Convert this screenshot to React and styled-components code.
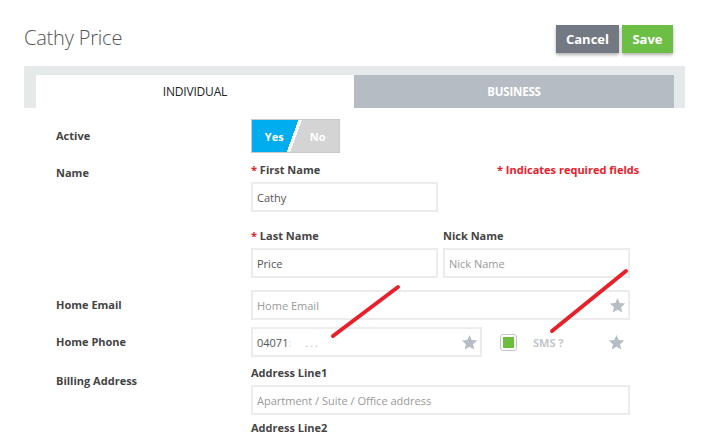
import React from "react";
import styled, { createGlobalStyle } from "styled-components";

const GlobalStyle = createGlobalStyle`
  html, body {
    margin: 0;
    padding: 0;
    background: #fff;
    font-family: "Open Sans", "Liberation Sans", Arial, sans-serif;
  }
`;

const Page = styled.div`
  position: relative;
  width: 708px;
  height: 438px;
  overflow: hidden;
`;

const Header = styled.div`
  display: flex;
  align-items: center;
  justify-content: space-between;
  height: 28px;
  padding: 25px 35px 0 24px;
`;

const Title = styled.h1`
  margin: 0 0 2px;
  font-size: 20px;
  line-height: 28px;
  font-weight: 300;
  color: #555;
  letter-spacing: -0.2px;
`;

const Actions = styled.div`
  display: flex;
  gap: 3px;
`;

const Button = styled.button`
  width: ${(p) => p.$w}px;
  height: 28px;
  padding: 0;
  border: none;
  background: ${(p) => p.$bg};
  color: #fff;
  font-family: inherit;
  font-size: 13px;
  font-weight: 700;
  box-shadow: 0 2px 3px rgba(0, 0, 0, 0.3);
`;

const Panel = styled.div`
  margin: 13px 23px 0 24px;
  padding: 9px 11px 0 12px;
  background: #e5e9e9;
`;

const Tabs = styled.div`
  display: grid;
  grid-template-columns: 318px 1fr;
  height: 33px;
`;

const Tab = styled.div`
  display: flex;
  align-items: center;
  justify-content: center;
  font-size: ${(p) => (p.$active ? 12 : 11.5)}px;
  letter-spacing: -0.2px;
  background: ${(p) => (p.$active ? "#fff" : "#b6bcc3")};
  color: ${(p) => (p.$active ? "#222" : "#fff")};
  font-weight: ${(p) => (p.$active ? 400 : 700)};
`;

const Form = styled.div`
  padding: 11px 0 0 56px;
  display: flex;
  flex-direction: column;
`;

const Row = styled.div`
  display: flex;
  align-items: ${(p) => (p.$center ? "center" : "flex-start")};
  margin-top: ${(p) => p.$mt || 0}px;
`;

const Label = styled.div`
  width: 195px;
  flex: none;
  font-size: 11px;
  line-height: 14px;
  font-weight: 700;
  color: #444;
  padding-top: ${(p) => p.$pt || 0}px;
`;

const Fields = styled.div`
  display: flex;
  flex-direction: column;
`;

const FieldGrid = styled.div`
  display: grid;
  grid-template-columns: 187px 187px;
  column-gap: 5px;
  position: relative;
`;

const Field = styled.div`
  display: flex;
  flex-direction: column;
  gap: 5px;
  margin-top: ${(p) => p.$mt || 0}px;
`;

const FieldLabel = styled.div`
  font-size: 11px;
  line-height: 14px;
  font-weight: 700;
  color: #444;
  white-space: nowrap;
`;

const Req = styled.span`
  color: #e8202a;
`;

const RequiredNote = styled.div`
  position: absolute;
  left: 246px;
  top: 0;
  font-size: 11px;
  line-height: 14px;
  font-weight: 700;
  color: #e8202a;
  white-space: nowrap;
`;

const InputBox = styled.div`
  box-sizing: border-box;
  width: ${(p) => p.$w}px;
  height: 30px;
  border: 2px solid #ececec;
  display: flex;
  align-items: center;
  padding: 0 2px 0 4px;
  font-size: 11px;
  color: ${(p) => (p.$placeholder ? "#9a9a9a" : "#555")};
`;

const InputText = styled.span`
  flex: 1;
  white-space: nowrap;
  overflow: hidden;
`;

const Masked = styled.span`
  color: #bbb;
  letter-spacing: 2px;
  margin-left: 14px;
`;

const Toggle = styled.div`
  box-sizing: border-box;
  width: 89px;
  height: 34px;
  border: 1px solid #c9c9c9;
  background: linear-gradient(110deg, #00adef 0 47%, #fff 47% 50.5%, #d4d4d4 50.5%);
  display: flex;
  align-items: center;
  font-size: 11px;
  font-weight: 700;
  color: #fff;
`;

const ToggleSide = styled.span`
  width: ${(p) => p.$w}px;
  text-align: center;
`;

const PhoneRow = styled.div`
  display: flex;
  align-items: center;
`;

const Check = styled.div`
  box-sizing: border-box;
  width: 17px;
  height: 17px;
  margin-left: 18px;
  border: 1px solid #c6c6c6;
  border-radius: 3px;
  display: flex;
  align-items: center;
  justify-content: center;
  &::after {
    content: "";
    width: 11px;
    height: 11px;
    background: #6cbe3c;
  }
`;

const Sms = styled.span`
  margin-left: 16px;
  width: 75px;
  font-size: 11px;
  font-weight: 700;
  color: #c4c8cc;
`;

const Overlay = styled.svg`
  position: absolute;
  left: 0;
  top: 0;
  pointer-events: none;
`;

const Star = () => (
  <svg width="17" height="17" viewBox="0 0 24 24">
    <path
      fill="#b6bdc5"
      d="M12 1.5l3.1 7.1 7.7.7-5.8 5.1 1.8 7.6L12 18l-6.8 4 1.8-7.6-5.8-5.1 7.7-.7z"
    />
  </svg>
);

const App = () => {
  return (
    <>
      <GlobalStyle />
      <Page>
        <Header>
          <Title>Cathy Price</Title>
          <Actions>
            <Button $bg="#737983" $w={63}>Cancel</Button>
            <Button $bg="#6dbe45" $w={51}>Save</Button>
          </Actions>
        </Header>

        <Panel>
          <Tabs>
            <Tab $active>INDIVIDUAL</Tab>
            <Tab>BUSINESS</Tab>
          </Tabs>
        </Panel>

        <Form>
          <Row $center>
            <Label>Active</Label>
            <Toggle>
              <ToggleSide $w={45}>Yes</ToggleSide>
              <ToggleSide $w={43}>No</ToggleSide>
            </Toggle>
          </Row>

          <Row $mt={10}>
            <Label $pt={3}>Name</Label>
            <Fields>
              <FieldGrid>
                <Field>
                  <FieldLabel><Req>*</Req> First Name</FieldLabel>
                  <InputBox $w={187}><InputText>Cathy</InputText></InputBox>
                </Field>
                <RequiredNote>* Indicates required fields</RequiredNote>
              </FieldGrid>
              <FieldGrid>
                <Field $mt={17}>
                  <FieldLabel><Req>*</Req> Last Name</FieldLabel>
                  <InputBox $w={187}><InputText>Price</InputText></InputBox>
                </Field>
                <Field $mt={17}>
                  <FieldLabel>Nick Name</FieldLabel>
                  <InputBox $w={187} $placeholder><InputText>Nick Name</InputText></InputBox>
                </Field>
              </FieldGrid>
            </Fields>
          </Row>

          <Row $center $mt={12}>
            <Label>Home Email</Label>
            <InputBox $w={379} $placeholder>
              <InputText>Home Email</InputText>
              <Star />
            </InputBox>
          </Row>

          <Row $center $mt={7}>
            <Label>Home Phone</Label>
            <PhoneRow>
              <InputBox $w={231}>
                <InputText>04071<span style={{ color: "#ddd" }}>:</span><Masked>...</Masked></InputText>
                <Star />
              </InputBox>
              <Check />
              <Sms>SMS ?</Sms>
              <Star />
            </PhoneRow>
          </Row>

          <Row $mt={9}>
            <Label $pt={8}>Billing Address</Label>
            <Fields>
              <Field>
                <FieldLabel>Address Line1</FieldLabel>
                <InputBox $w={379} $placeholder><InputText>Apartment / Suite / Office address</InputText></InputBox>
              </Field>
              <Field $mt={6}>
                <FieldLabel>Address Line2</FieldLabel>
              </Field>
            </Fields>
          </Row>
        </Form>

        <Overlay width="708" height="438">
          <g stroke="#e8202a" strokeWidth="4" strokeLinecap="round">
            <line x1="398" y1="287" x2="333" y2="336" />
            <line x1="626" y1="271" x2="552" y2="331" />
          </g>
        </Overlay>
      </Page>
    </>
  );
};

export default App;
